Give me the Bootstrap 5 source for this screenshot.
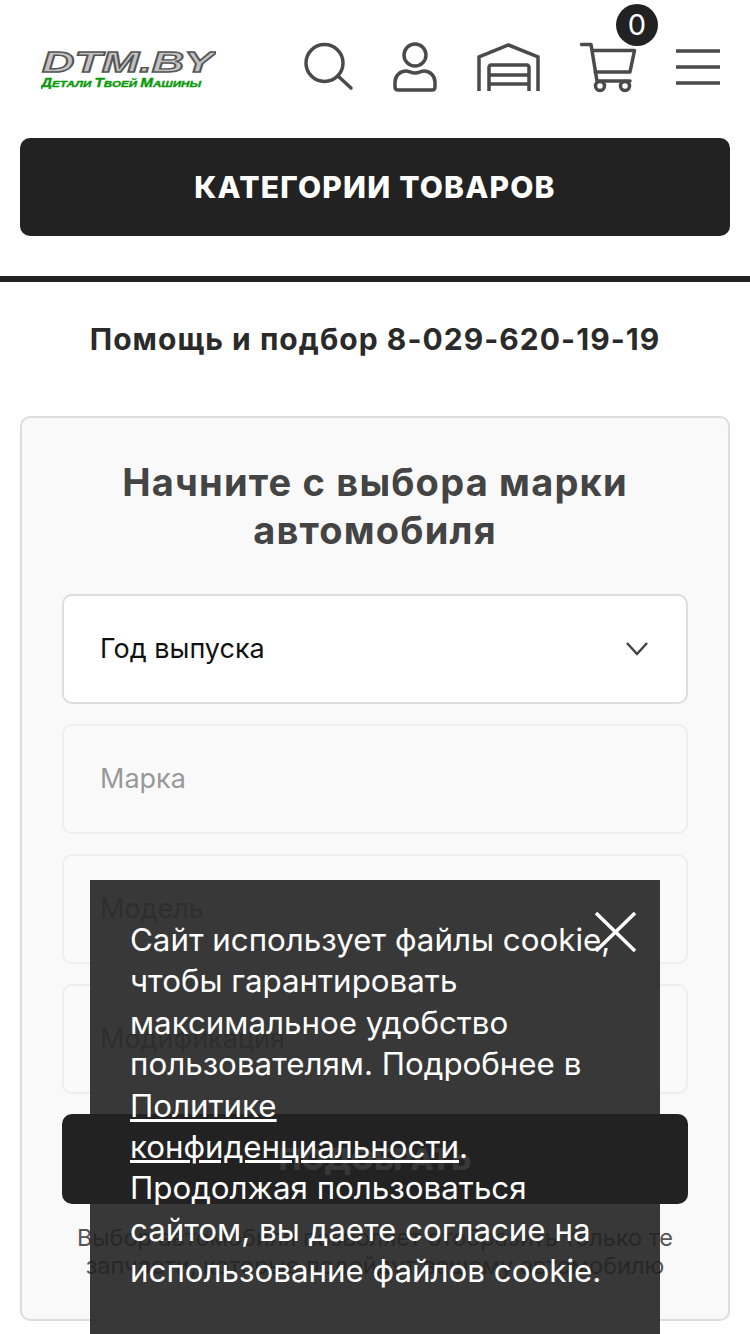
<!DOCTYPE html>
<html lang="ru">
<head>
  <meta charset="UTF-8">
  <title>DTM.BY</title>
  <meta name="viewport" content="width=device-width, initial-scale=1">
  <link href="https://cdn.jsdelivr.net/npm/bootstrap@5.3.3/dist/css/bootstrap.min.css" rel="stylesheet">
  <style>
    html, body { height: 1334px; overflow: hidden; }
    body { font-family: Inter, Roboto, sans-serif; color: #222; background: #fff; position: relative; }
    .site-head { height: 138px; padding: 16px 30px 20px 41px; }
    .logo-box { width: 175px; height: 44px; }
    .logo-box svg { display: block; }
    .head-icons { margin-left: 88px; gap: 40px; }
    .head-icons svg { display: block; fill: none; stroke: #4a4a4a; stroke-width: 3.5; overflow: visible; }
    .cart-wrap { position: relative; display: block; }
    .cart-count { position: absolute; left: 36px; top: -39px; width: 42px; height: 42px; border-radius: 50%; background: #222; color: #fff; font-size: 29px; line-height: 42px; text-align: center; }
    .cat-btn { display: block; width: 710px; height: 98px; margin: 0 20px; background: #222; color: #fff; border: 0; border-radius: 10px; font-size: 30px; font-weight: 800; letter-spacing: 1.2px; }
    .divider { height: 6px; margin-top: 40px; background: #222; }
    .help-line { margin: 39px 0 59px; font-size: 30px; line-height: 36px; font-weight: 700; letter-spacing: 1.05px; text-align: center; color: #2a2a2a; }
    .pick-card { margin: 0 20px; height: 905px; padding: 40px 40px 0; background: #f9f9f9; border: 2px solid #ddd; border-radius: 10px; }
    .pick-card h2 { margin: 0 0 40px; font-size: 38px; line-height: 48px; font-weight: 700; letter-spacing: 1.2px; text-align: center; color: #444; }
    .pick-select.form-select { height: 110px; margin-bottom: 20px; padding: 0 36px; font-size: 27px; color: #111; background-color: #fff; border: 2px solid #ddd; border-radius: 10px; background-position: right 36px center; background-size: 26px 18px; background-image: url("data:image/svg+xml,%3csvg xmlns='http://www.w3.org/2000/svg' viewBox='0 0 26 18'%3e%3cpath fill='none' stroke='%23444' stroke-width='2.5' d='M3 3l10 11L23 3'/%3e%3c/svg%3e"); }
    .pick-select.form-select:disabled { color: #999; background-color: #fafafa; border-color: #eee; background-image: none; }
    .pick-btn { display: block; width: 100%; height: 90px; background: #222; color: #fff; border: 0; border-radius: 10px; font-size: 30px; font-weight: 800; }
    .pick-note { margin: 20px 0 0; font-size: 23.5px; line-height: 28px; text-align: center; color: #555; }
    .cookie-box { position: absolute; left: 90px; top: 880px; width: 570px; height: 454px; padding: 40px 40px; background: rgba(34,34,34,.9); color: #fff; font-size: 31.3px; line-height: 41.4px; }
    .cookie-box a { color: #fff; }
    .cookie-close { position: absolute; right: 24px; top: 32px; width: 41px; height: 40px; padding: 0; border: 0; background: none; }
    .cookie-close svg { display: block; stroke: #fff; stroke-width: 3.5; }
  </style>
</head>
<body>
  <!-- Header -->
  <header class="site-head d-flex align-items-center">
    <a href="#" class="logo-box d-block">
      <svg width="175" height="44" viewBox="0 0 175 44">
        <text x="1" y="27" textLength="172" lengthAdjust="spacingAndGlyphs" font-family="Liberation Sans" font-size="29.500" font-weight="700" font-style="italic" fill="#c2c2c2" stroke="#555" stroke-width="1.400">DTM.BY</text>
        <text x="0" y="41.500" textLength="160" lengthAdjust="spacingAndGlyphs" font-family="Liberation Sans" font-size="9.500" font-weight="700" font-style="italic" fill="#0a9a0a" stroke="#0a9a0a" stroke-width=".4"><tspan font-size="12.500">Д</tspan>ЕТАЛИ <tspan font-size="12.500">Т</tspan>ВОЕЙ <tspan font-size="12.500">М</tspan>АШИНЫ</text>
      </svg>
    </a>
    <div class="head-icons d-flex align-items-center">
      <a href="#"><svg width="49" height="48" viewBox="0 0 49 48"><circle cx="20.500" cy="20" r="18.500"/><path d="M34 33l13 12" stroke-linecap="round"/></svg></a>
      <a href="#"><svg width="44" height="48" viewBox="0 0 44 48"><circle cx="22" cy="12" r="11"/><path d="M2 44v-5c0-6 5-11 11-11 3 0 5 2 9 2s6-2 9-2c6 0 11 5 11 11v5c0 2-1 3-3 3H5c-2 0-3-1-3-3z"/></svg></a>
      <a href="#"><svg width="63" height="48" viewBox="0 0 63 48"><path d="M2 48V14L31.500 2 61 14v34M12 48V24c0-1 1-2 2-2h36c1 0 2 1 2 2v24M12 32h40M12 41h40"/></svg></a>
      <a href="#" class="cart-wrap"><svg width="56" height="48" viewBox="0 0 56 48"><path d="M1.500 1.500H11l6 36.500h33M12 7.500h42.500L50 29H15" stroke-linejoin="round" stroke-linecap="round"/><circle cx="20" cy="43" r="4.500"/><circle cx="45" cy="43" r="4.500"/></svg><span class="cart-count">0</span></a>
      <a href="#"><svg width="44" height="36" viewBox="0 0 44 36"><path d="M0 2h44M0 18h44M0 34h44"/></svg></a>
    </div>
  </header>

  <button class="cat-btn" type="button">КАТЕГОРИИ ТОВАРОВ</button>
  <div class="divider"></div>
  <p class="help-line">Помощь и подбор 8-029-620-19-19</p>

  <!-- Car picker -->
  <section class="pick-card">
    <h2>Начните с выбора марки автомобиля</h2>
    <select class="form-select pick-select"><option>Год выпуска</option></select>
    <select class="form-select pick-select" disabled><option>Марка</option></select>
    <select class="form-select pick-select" disabled><option>Модель</option></select>
    <select class="form-select pick-select" disabled><option>Модификация</option></select>
    <button class="pick-btn" type="button">ПОДОБРАТЬ</button>
    <p class="pick-note">Выбор автомобиля позволяет отобразить только те запчасти, которые подойдут вашему автомобилю</p>
  </section>

  <!-- Cookie notice -->
  <div class="cookie-box">
    <button class="cookie-close" type="button" aria-label="Закрыть"><svg width="41" height="40" viewBox="0 0 41 40"><path d="M1 1l39 38M40 1L1 39"/></svg></button>
    Сайт использует файлы cookie, чтобы гарантировать максимальное удобство пользователям. Подробнее в <a href="#">Политике конфиденциальности</a>. Продолжая пользоваться сайтом, вы даете согласие на использование файлов cookie.
  </div>
  <script src="https://cdn.jsdelivr.net/npm/bootstrap@5.3.3/dist/js/bootstrap.bundle.min.js"></script>
</body>
</html>
